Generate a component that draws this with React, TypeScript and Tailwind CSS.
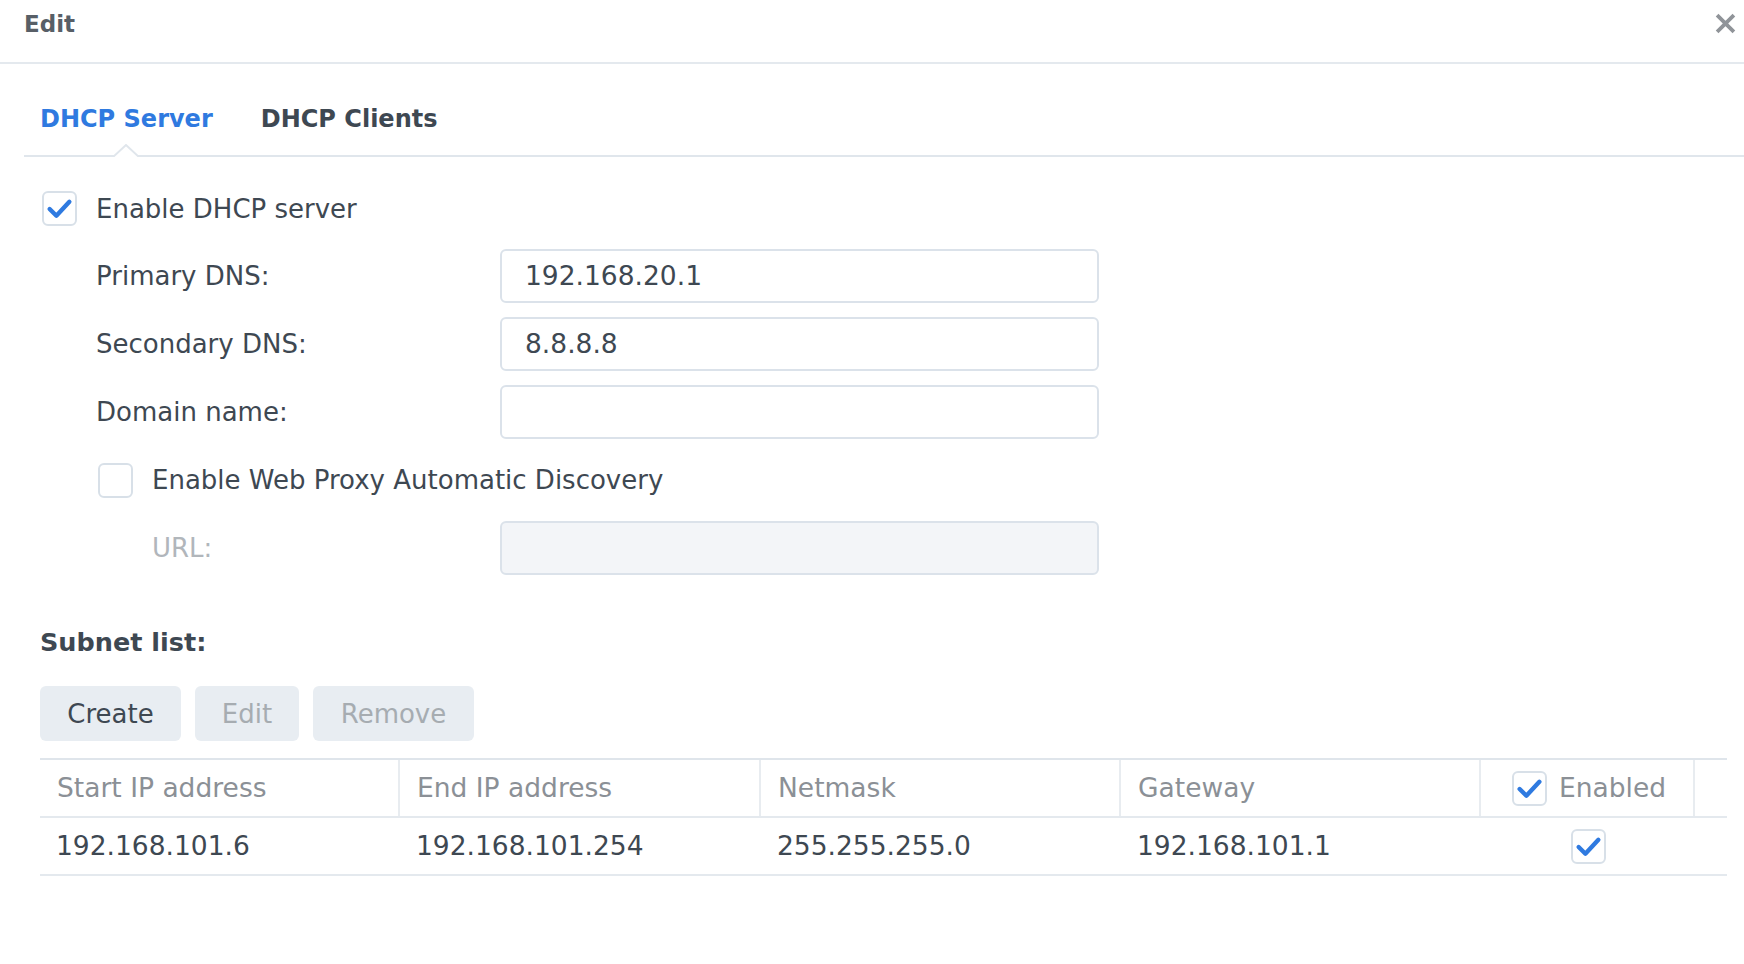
import React from 'react';

const Check = ({ checked = false }: { checked?: boolean }) => (
  <div className="w-[35px] h-[35px] shrink-0 rounded-[6px] border-2 border-[#d8e0e8] bg-white flex items-center justify-center">
    {checked && (
      <svg width="27" height="27" viewBox="0 0 26 26" fill="none">
        <path d="M3.5 13.5 L10 20 L22.5 6.5" stroke="#2f7ae0" strokeWidth="4.2" strokeLinecap="round" strokeLinejoin="round" />
      </svg>
    )}
  </div>
);

const Field = ({ label, value, disabled = false, indent = false }: { label: string; value?: string; disabled?: boolean; indent?: boolean }) => (
  <div className="flex items-center h-[54px]">
    <div className={`w-[460px] shrink-0 ${indent ? 'pl-[112px]' : 'pl-[56px]'} ${disabled ? 'text-[#b1b6bb]' : 'text-[#3e4852]'}`}>{label}</div>
    <div
      className={`w-[599px] h-[54px] rounded-[6px] border-2 border-[#dbe2ea] flex items-center px-[23px] text-[26.5px] text-[#3e4852] ${disabled ? 'bg-[#f3f5f8]' : 'bg-white'}`}
    >
      {value}
    </div>
  </div>
);

export default function App() {
  const cols = ['Start IP address', 'End IP address', 'Netmask', 'Gateway'];
  const row = ['192.168.101.6', '192.168.101.254', '255.255.255.0', '192.168.101.1'];

  return (
    <div className="w-[1744px] h-[964px] bg-white font-['DejaVu_Sans',sans-serif] text-[26px] leading-[30px] text-[#3e4852] overflow-hidden">
      {/* header */}
      <div className="h-[64px] flex items-center justify-between pl-[24px] pr-[6px] pb-[15px] border-b-2 border-[#e4e9ee]">
        <span className="font-bold text-[23px] text-[#585f67]">Edit</span>
        <svg width="21" height="21" viewBox="0 0 20 20" className="mr-[2px]">
          <path d="M2 2 L18 18 M18 2 L2 18" stroke="#909499" strokeWidth="3.6" strokeLinecap="butt" />
        </svg>
      </div>

      {/* tabs */}
      <div className="ml-[24px] h-[93px] border-b-2 border-[#e0e6ec] flex items-end gap-[48px] pl-[16px] pb-[21px] font-bold text-[24px]">
        <div className="relative text-[#2f7ae0]">
          DHCP Server
          <svg width="26" height="14" viewBox="0 0 26 14" className="absolute left-1/2 -translate-x-1/2 top-[40px]">
            <path d="M0 13 L13 1 L26 13" fill="white" stroke="#e0e6ec" strokeWidth="2" />
            <rect x="0" y="13" width="26" height="2" fill="white" />
          </svg>
        </div>
        <div className="text-[#3e4852]">DHCP Clients</div>
      </div>

      {/* form */}
      <div className="px-[40px]">
        <div className="flex items-center gap-[19px] mt-[34px] pl-[2px]">
          <Check checked />
          <span>Enable DHCP server</span>
        </div>

        <div className="flex flex-col gap-[14px] mt-[23px]">
          <Field label="Primary DNS:" value="192.168.20.1" />
          <Field label="Secondary DNS:" value="8.8.8.8" />
          <Field label="Domain name:" value="" />
          <div className="flex items-center h-[54px] pl-[58px] gap-[19px]">
            <Check />
            <span>Enable Web Proxy Automatic Discovery</span>
          </div>
          <Field label="URL:" value="" disabled indent />
        </div>

        <div className="mt-[52px] font-bold text-[25.5px] text-[#3e4852]">Subnet list:</div>

        <div className="flex gap-[14px] mt-[29px]">
          <button className="h-[55px] w-[141px] rounded-[6px] bg-[#e8edf2] text-[#3e4852]">Create</button>
          <button className="h-[55px] w-[104px] rounded-[6px] bg-[#e8edf2] text-[#a6acb1]">Edit</button>
          <button className="h-[55px] w-[161px] rounded-[6px] bg-[#e8edf2] text-[#a6acb1]">Remove</button>
        </div>

        {/* table */}
        <div className="mt-[17px] w-[1687px] border-t-2 border-[#dfe5eb]">
          <div className="grid grid-cols-[360px_361px_360px_360px_214px_1fr] h-[58px] border-b-2 border-[#e4e9ee] text-[26.5px] text-[#8b9096]">
            {cols.map((c) => (
              <div key={c} className="flex items-center pl-[17px] border-r-2 border-[#e8ecf0]">{c}</div>
            ))}
            <div className="flex items-center justify-center gap-[12px] pl-[4px] border-r-2 border-[#e8ecf0]">
              <Check checked />
              <span>Enabled</span>
            </div>
            <div />
          </div>
          <div className="grid grid-cols-[360px_361px_360px_360px_214px_1fr] h-[58px] border-b-2 border-[#e4e9ee] text-[26.5px] text-[#3e4852]">
            {row.map((c) => (
              <div key={c} className="flex items-center pl-[16px]">{c}</div>
            ))}
            <div className="flex items-center justify-center">
              <Check checked />
            </div>
            <div />
          </div>
        </div>
      </div>
    </div>
  );
}
